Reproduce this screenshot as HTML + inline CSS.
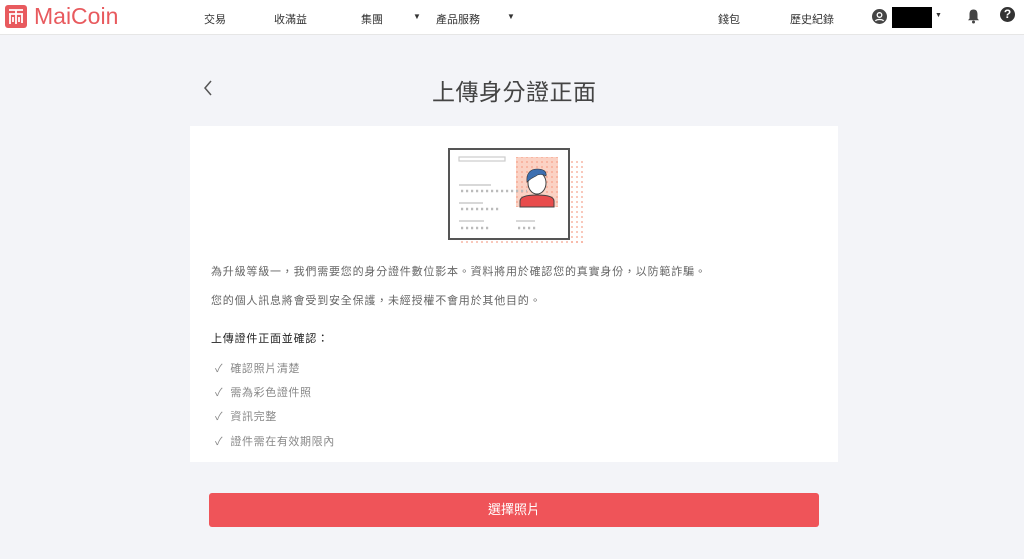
<!DOCTYPE html>
<html><head><meta charset="utf-8"><style>
*{margin:0;padding:0;box-sizing:border-box}
body{width:1024px;height:559px;background:#f3f4f8;font-family:"Liberation Sans","Noto Sans CJK TC",sans-serif;position:relative;overflow:hidden;color:#333}
.hdr{position:absolute;left:0;top:0;width:1024px;height:35px;background:#fff;border-bottom:1px solid #e6e6e6}
.a{position:absolute;font-size:11px;color:#333;top:11px}
.ab{position:absolute}
.card{position:absolute;left:190px;top:126px;width:648px;height:336px;background:#fff}
.t{position:absolute;font-size:11px;color:#666;left:211px;letter-spacing:0.8px}
.c{position:absolute;font-size:11px;color:#888;left:215px;letter-spacing:0.6px}
</style></head><body>
<div class="hdr">
 <div class="ab" style="left:5px;top:5px;width:22px;height:23px;background:#e85a5e;border-radius:3px"><svg width="22" height="23" viewBox="0 0 22 23"><path d="M4 5h14M4 9h14M5 9v10M17 9v9M11 5v14M8 12v5M14 12v5" stroke="#fff" stroke-width="1.8" fill="none"/></svg></div>
 <div class="ab" style="left:34px;top:3px;font-size:23px;color:#e85a5e">MaiCoin</div>
 <div class="a" style="left:204px">交易</div>
 <div class="a" style="left:274px">收滿益</div>
 <div class="a" style="left:361px">集團</div><div class="a" style="left:413px;font-size:8px;top:12px">▼</div>
 <div class="a" style="left:436px">產品服務</div><div class="a" style="left:507px;font-size:8px;top:12px">▼</div>
 <div class="a" style="left:718px">錢包</div>
 <div class="a" style="left:790px">歷史紀錄</div>
 <div class="ab" style="left:872px;top:9px;width:15px;height:15px;border-radius:50%;background:#444"><svg width="15" height="15"><circle cx="7.5" cy="6" r="2.3" fill="none" stroke="#fff" stroke-width="1.3"/><path d="M3.5 12c1-2 7-2 8 0" stroke="#fff" stroke-width="1.3" fill="none"/></svg></div>
 <div class="ab" style="left:892px;top:7px;width:40px;height:21px;background:#000"></div>
 <div class="a" style="left:935px;font-size:7px;top:12px">▼</div>
 <svg class="ab" style="left:967px;top:8px" width="13" height="16"><path d="M6.5 1.5c-3 0-4 2-4 5v4l-1.5 1.8h11l-1.5-1.8v-4c0-3-1-5-4-5z" fill="#444"/><circle cx="6.5" cy="14" r="1.5" fill="#444"/></svg>
 <div class="ab" style="left:1000px;top:7px;width:15px;height:15px;border-radius:50%;background:#333;color:#fff;font-size:12px;font-weight:bold;text-align:center;line-height:15px">?</div>
</div>
<svg class="ab" style="left:202px;top:79px" width="12" height="18"><path d="M9 2L3 9l6 7" stroke="#555" stroke-width="1.5" fill="none"/></svg>
<div class="ab" style="left:432px;top:73px;font-size:23px;color:#444;letter-spacing:0.5px">上傳身分證正面</div>
<div class="card"></div>
<svg class="ab" style="left:440px;top:140px" width="150" height="110">
 <defs><pattern id="d" width="5" height="5" patternUnits="userSpaceOnUse"><circle cx="2" cy="2" r="0.9" fill="#f5a08a"/></pattern></defs>
 <rect x="18" y="100" width="125" height="6" fill="url(#d)"/>
 <rect x="130" y="18" width="13" height="88" fill="url(#d)"/>
 <rect x="9" y="9" width="120" height="90" fill="#fff" stroke="#555" stroke-width="2"/>
 <rect x="19" y="17" width="46" height="4" fill="none" stroke="#ccc" stroke-width="1.2"/>
 <rect x="76" y="17" width="42" height="50" fill="#fbd2c4"/><rect x="76" y="17" width="42" height="50" fill="url(#d)"/>
 <path d="M80 67v-6c0-4 5-6 17-6s17 2 17 6v6z" fill="#e84c4c" stroke="#444"/>
 <ellipse cx="97" cy="43" rx="9" ry="11" fill="#fff" stroke="#444"/>
 <path d="M87 42c-1-8 3-13 10-13 6 0 10 2 9 7-3-2-8-2-10 0-2 1-5 2-9 6z" fill="#3d6fb0" stroke="#333" stroke-width=".6"/>
 <path d="M19 45h32M19 63h24M19 81h25M76 81h19" stroke="#ccc" stroke-width="1.5"/>
 <path d="M21 51h66M21 69h40M21 88h28M78 88h20" stroke="#bbb" stroke-width="2.5" stroke-dasharray="2.2 2.8"/>
</svg>
<div class="t" style="top:263px">為升級等級一，我們需要您的身分證件數位影本。資料將用於確認您的真實身份，以防範詐騙。</div>
<div class="t" style="top:292px">您的個人訊息將會受到安全保護，未經授權不會用於其他目的。</div>
<div class="t" style="top:330px;color:#222">上傳證件正面並確認：</div>
<div class="c" style="top:360px">✓&nbsp; 確認照片清楚</div>
<div class="c" style="top:384px">✓&nbsp; 需為彩色證件照</div>
<div class="c" style="top:408px">✓&nbsp; 資訊完整</div>
<div class="c" style="top:433px">✓&nbsp; 證件需在有效期限內</div>
<div class="ab" style="left:209px;top:493px;width:610px;height:34px;background:#ef5459;border-radius:3px;color:#fff;font-size:13px;text-align:center;line-height:34px">選擇照片</div>
</body></html>
